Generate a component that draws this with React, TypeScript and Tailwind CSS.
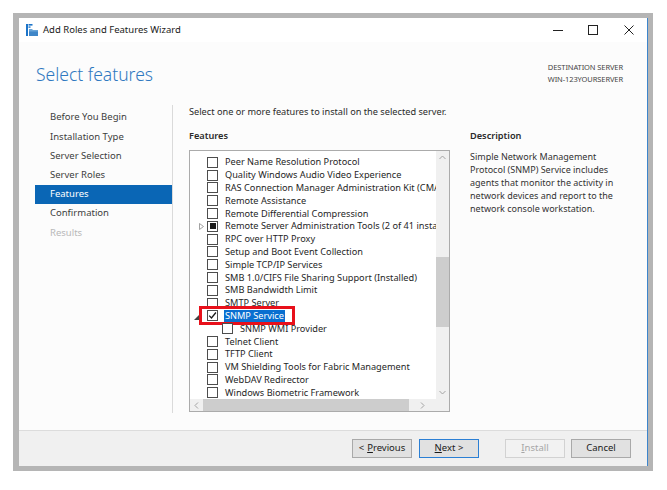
import React from "react";

const F = { fontFamily: '"Noto Sans", "Open Sans", sans-serif' };

type Item = { label: string; state?: "none" | "checked" | "partial"; expander?: "closed" | "open"; indent?: boolean; selected?: boolean };

const items: Item[] = [
  { label: "Peer Name Resolution Protocol" },
  { label: "Quality Windows Audio Video Experience" },
  { label: "RAS Connection Manager Administration Kit (CMAK)" },
  { label: "Remote Assistance" },
  { label: "Remote Differential Compression" },
  { label: "Remote Server Administration Tools (2 of 41 installed)", state: "partial", expander: "closed" },
  { label: "RPC over HTTP Proxy" },
  { label: "Setup and Boot Event Collection" },
  { label: "Simple TCP/IP Services" },
  { label: "SMB 1.0/CIFS File Sharing Support (Installed)" },
  { label: "SMB Bandwidth Limit" },
  { label: "SMTP Server" },
  { label: "SNMP Service", state: "checked", expander: "open", selected: true },
  { label: "SNMP WMI Provider", indent: true },
  { label: "Telnet Client" },
  { label: "TFTP Client" },
  { label: "VM Shielding Tools for Fabric Management" },
  { label: "WebDAV Redirector" },
  { label: "Windows Biometric Framework" },
  { label: "Windows Defender Features" },
];

function Checkbox({ state }: { state?: string }) {
  return (
    <div className="w-[11px] h-[11px] border border-[#4d4d4d] bg-white flex items-center justify-center shrink-0">
      {state === "partial" && <div className="w-[6px] h-[6px] bg-[#1a1a1a]" />}
      {state === "checked" && (
        <svg width="9" height="9" viewBox="0 0 9 9">
          <path d="M1.2 4.6 L3.5 7 L7.9 1.5" stroke="#1a1a1a" strokeWidth="1.3" fill="none" />
        </svg>
      )}
    </div>
  );
}

function Row({ it }: { it: Item }) {
  return (
    <div className="h-[12.8px] flex items-center relative whitespace-nowrap">
      <div className="w-[13px] shrink-0 flex items-center justify-end pr-[2px]">
        {it.expander === "closed" && (
          <svg width="5" height="7" viewBox="0 0 5 7"><path d="M0.5 0.5 L4.5 3.5 L0.5 6.5 Z" fill="none" stroke="#8a8a8a" strokeWidth="0.8" /></svg>
        )}
        {it.expander === "open" && (
          <svg width="6" height="6" viewBox="0 0 6 6" className="mr-[4px] mt-[3px]"><path d="M6 0 L6 6 L0 6 Z" fill="#444" /></svg>
        )}
      </div>
      <div className={it.indent ? "ml-[16px]" : "ml-[1px]"}>
        <Checkbox state={it.state} />
      </div>
      <span
        className={
          "ml-[6px] text-[9.2px] leading-[12px] px-[1px] " +
          (it.selected ? "bg-[#0a6fd0] text-white" : "text-[#1f1f1f]")
        }
      >
        {it.label}
      </span>
      {it.selected && (
        <div className="absolute left-[6px] top-[-4px] w-[96px] h-[19px] border-[3px] border-[#e8101a]" />
      )}
    </div>
  );
}

function NavItem({ label, active, disabled }: { label: string; active?: boolean; disabled?: boolean }) {
  return (
    <div
      className={
        "h-[19.2px] flex items-center pl-[15px] text-[9.5px] " +
        (active ? "bg-[#0a66b5] text-white" : disabled ? "text-[#b8b8b8]" : "text-[#3c3c3c]")
      }
    >
      {label}
    </div>
  );
}

function Btn({ children, primary, disabled }: { children: React.ReactNode; primary?: boolean; disabled?: boolean }) {
  return (
    <div
      className={
        "w-[60px] h-[19px] flex items-center justify-center text-[9.5px] border " +
        (primary
          ? "border-[#2b7fd4] bg-[#e1e1e1] text-[#1a1a1a]"
          : disabled
          ? "border-[#d2d2d2] bg-[#f2f2f2] text-[#a6a6a6]"
          : "border-[#a9a9a9] bg-[#e1e1e1] text-[#1a1a1a]")
      }
    >
      {children}
    </div>
  );
}

export default function App() {
  return (
    <div className="w-[667px] h-[490px] bg-white pt-[13px] pl-[13px]" style={F}>
      <div className="w-[640px] h-[458px] border-l-[6px] border-t-[5px] border-r-[5px] border-b-[5px] border-[#b5b5b5] bg-[#b5b5b5]">
        <div className="w-full h-full bg-[#fcfcfc] border-r border-[#3d85cc] flex flex-col">
          {/* title bar */}
          <div className="h-[24px] bg-white flex items-center pl-[7px] shrink-0">
            <svg width="12" height="12" viewBox="0 0 12 12">
              <rect x="0" y="0" width="2" height="12" fill="#1c74c9" />
              <rect x="2.5" y="0" width="4" height="1.6" fill="#1c74c9" />
              <rect x="2.5" y="2.4" width="2" height="1.4" fill="#1c74c9" />
              <path d="M3 5 L6 5 L7 6 L12 6 L12 12 L3 12 Z" fill="#6aa5d8" />
              <rect x="3" y="7.5" width="9" height="4.5" fill="#3f86c8" />
            </svg>
            <span className="ml-[5px] text-[9.5px] text-[#1a1a1a]">Add Roles and Features Wizard</span>
            <div className="ml-auto flex items-center">
              <div className="w-[35px] flex justify-center">
                <svg width="10" height="10" viewBox="0 0 10 10"><path d="M0 5.5 H10" stroke="#222" strokeWidth="1" /></svg>
              </div>
              <div className="w-[35px] flex justify-center">
                <svg width="10" height="10" viewBox="0 0 10 10"><rect x="0.5" y="0.5" width="9" height="9" fill="none" stroke="#222" strokeWidth="1" /></svg>
              </div>
              <div className="w-[37px] flex justify-center">
                <svg width="10" height="10" viewBox="0 0 10 10"><path d="M0.5 0.5 L9.5 9.5 M9.5 0.5 L0.5 9.5" stroke="#222" strokeWidth="1" /></svg>
              </div>
            </div>
          </div>
          {/* header */}
          <div className="h-[58px] shrink-0 flex items-start pl-[17px] pr-[24px] pt-[19px]">
            <div className="text-[17.5px] font-light text-[#2f78c0] leading-[26px]">Select features</div>
            <div className="ml-auto text-right text-[7.5px] leading-[12px] text-[#444] tracking-[-0.1px]">
              <div>DESTINATION SERVER</div>
              <div>WIN-123YOURSERVER</div>
            </div>
          </div>
          {/* main */}
          <div className="flex-1 flex min-h-0">
            <div className="w-[154px] shrink-0 pl-[16px] pt-[3px] border-r border-[#dadada] mt-[5px] mb-[17px]">
              <NavItem label="Before You Begin" />
              <NavItem label="Installation Type" />
              <NavItem label="Server Selection" />
              <NavItem label="Server Roles" />
              <NavItem label="Features" active />
              <NavItem label="Confirmation" />
              <NavItem label="Results" disabled />
            </div>
            <div className="flex-1 pl-[16px] pt-[5px] flex flex-col">
              <div className="text-[9.2px] text-[#2a2a2a] h-[14px] leading-[14px]">
                Select one or more features to install on the selected server.
              </div>
              <div className="flex mt-[10px]">
                <div className="w-[261px] shrink-0">
                  <div className="text-[9.2px] font-semibold text-[#2a2a2a] h-[14px] leading-[14px]">Features</div>
                  <div className="mt-[7px] w-[261px] h-[262px] border border-[#ababab] bg-white flex flex-col">
                    <div className="flex flex-1 min-h-0">
                      <div className="flex-1 min-w-0 overflow-hidden pt-[5px] pl-[3px]">
                        {items.map((it) => (
                          <Row key={it.label} it={it} />
                        ))}
                      </div>
                      <div className="w-[13px] shrink-0 bg-[#f0f0f0] flex flex-col items-center">
                        <div className="h-[13px] flex items-center justify-center">
                          <svg width="7" height="5" viewBox="0 0 7 5"><path d="M0.5 4 L3.5 1 L6.5 4" stroke="#a3a3a3" fill="none" /></svg>
                        </div>
                        <div className="mt-[93px] w-[13px] h-[70px] bg-[#cdcdcd]" />
                        <div className="flex-1" />
                        <div className="h-[13px] flex items-center justify-center">
                          <svg width="7" height="5" viewBox="0 0 7 5"><path d="M0.5 1 L3.5 4 L6.5 1" stroke="#a3a3a3" fill="none" /></svg>
                        </div>
                      </div>
                    </div>
                    <div className="h-[12px] shrink-0 flex bg-[#f0f0f0]">
                      <div className="w-[13px] flex items-center justify-center">
                        <svg width="5" height="7" viewBox="0 0 5 7"><path d="M4 0.5 L1 3.5 L4 6.5" stroke="#a3a3a3" fill="none" /></svg>
                      </div>
                      <div className="w-[206px] bg-[#cdcdcd]" />
                      <div className="flex-1 flex items-center justify-center">
                        <svg width="5" height="7" viewBox="0 0 5 7"><path d="M1 0.5 L4 3.5 L1 6.5" stroke="#a3a3a3" fill="none" /></svg>
                      </div>
                      <div className="w-[13px] bg-[#f0f0f0]" />
                    </div>
                  </div>
                </div>
                <div className="ml-[20px] flex-1">
                  <div className="text-[9.2px] font-semibold text-[#2a2a2a] h-[14px] leading-[14px]">Description</div>
                  <div className="mt-[7px] text-[9px] leading-[13px] text-[#333] w-[160px]">
                    Simple Network Management Protocol (SNMP) Service includes agents that monitor the activity in network devices and report to the network console workstation.
                  </div>
                </div>
              </div>
            </div>
          </div>
          {/* footer */}
          <div className="h-[36px] shrink-0 bg-[#f0f0f0] border-t border-[#dcdcdc] flex items-center justify-end pr-[16px]">
            <Btn>
              &lt; <span className="underline ml-[3px]">P</span>revious
            </Btn>
            <div className="w-[7px]" />
            <Btn primary>
              <span className="underline">N</span>ext &gt;
            </Btn>
            <div className="w-[26px]" />
            <Btn disabled>
              <span className="underline">I</span>nstall
            </Btn>
            <div className="w-[6px]" />
            <Btn>Cancel</Btn>
          </div>
        </div>
      </div>
    </div>
  );
}
